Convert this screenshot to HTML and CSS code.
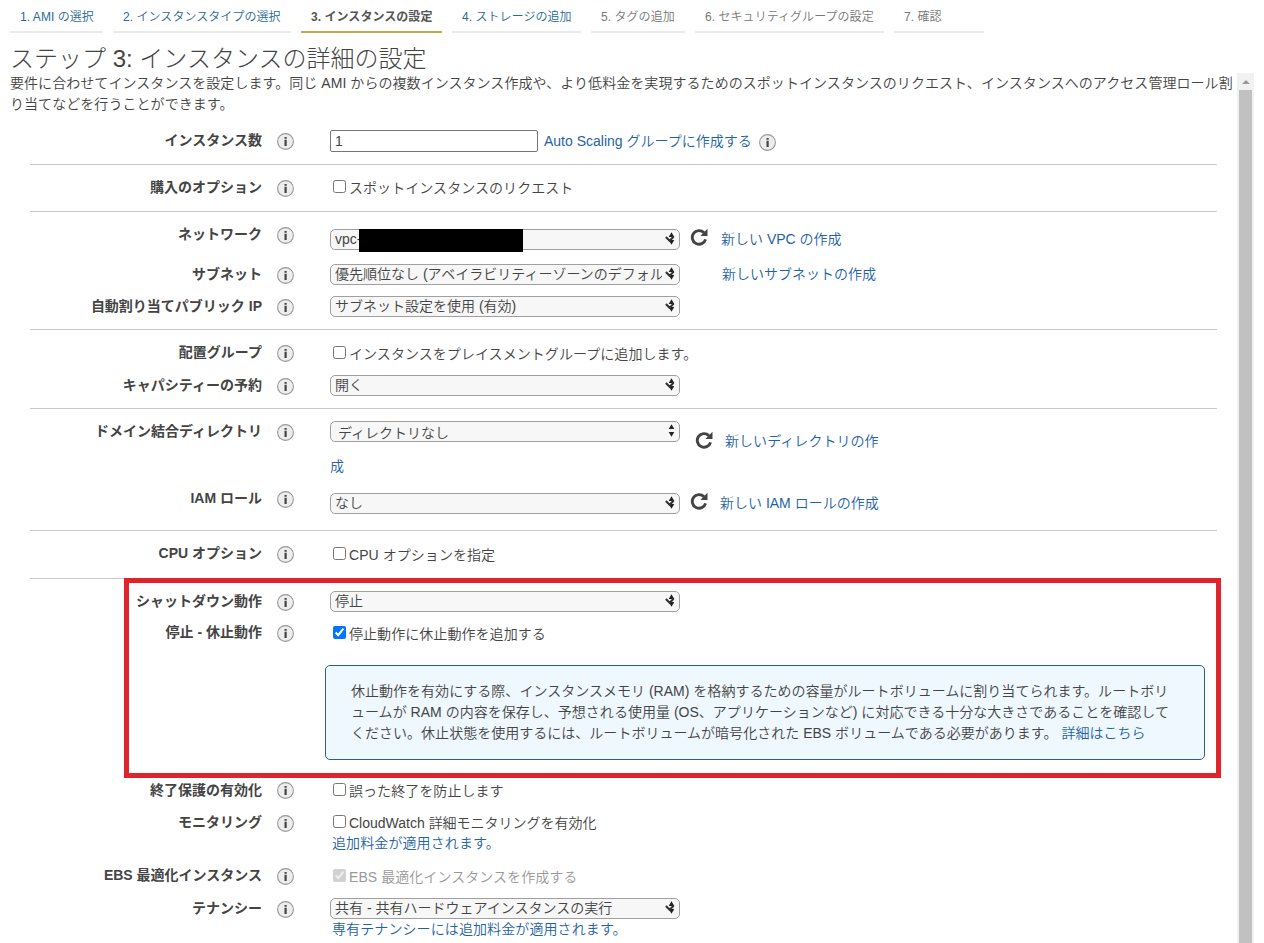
FILE: index.html
```
<!DOCTYPE html>
<html lang="ja">
<head>
    <meta charset="UTF-8">
    <meta name="viewport" content="width=device-width, initial-scale=1.0">
    <title>インスタンスの詳細の設定</title>
    <link rel="stylesheet" href="styles.css">
</head>
<body>
    <!-- Shared icons -->
    <svg class="defs" width="0" height="0">
        <symbol id="info" viewBox="0 0 17 17">
            <circle cx="8.5" cy="8.5" r="7.9" fill="#ededed" stroke="#999" stroke-width="1.1"/>
            <path d="M7.5 3.9h2.2v1.9H7.5zM7.5 6.8h2.2v6.3H7.5z" fill="#444"/>
        </symbol>
        <symbol id="arrows" viewBox="0 0 11 13">
            <path d="M6.5 0.3L9.3 4.9H3.7zM6.5 12.7L3.7 8.1h5.6z" fill="#222"/>
            <path d="M0.9 5l3.7 3.7L8.6 4.7" fill="none" stroke="#333" stroke-width="2.1"/>
        </symbol>
        <symbol id="updown" viewBox="0 0 11 13">
            <path d="M6.5 0.3L9.3 4.9H3.7zM6.5 12.7L3.7 8.1h5.6z" fill="#222"/>
        </symbol>
        <symbol id="refresh" viewBox="0 0 18 18">
            <path d="M13.9 4.6A6.8 6.8 0 1 0 15.6 11.4" fill="none" stroke="#444" stroke-width="2.9"/>
            <path d="M17.5 0.8v7.1h-7.1z" fill="#444"/>
        </symbol>
    </svg>

    <nav class="steps">
        <a class="step step-1">1. AMI の選択</a>
        <a class="step step-2">2. インスタンスタイプの選択</a>
        <a class="step step-3 active">3. インスタンスの設定</a>
        <a class="step step-4">4. ストレージの追加</a>
        <a class="step step-5 todo">5. タグの追加</a>
        <a class="step step-6 todo">6. セキュリティグループの設定</a>
        <a class="step step-7 todo">7. 確認</a>
    </nav>

    <h1>ステップ <span class="number">3:</span> インスタンスの詳細の設定</h1>

    <div class="main">
        <div class="content">
            <p class="intro">要件に合わせてインスタンスを設定します。同じ AMI からの複数インスタンス作成や、より低料金を実現するためのスポットインスタンスのリクエスト、インスタンスへのアクセス管理ロール割り当てなどを行うことができます。</p>

            <section class="group">
                <div class="row">
                    <label class="name">インスタンス数</label>
                    <svg class="info"><use href="#info"/></svg>
                    <div class="field">
                        <input class="count" type="text" value="1">
                        <a class="scaling">Auto Scaling グループに作成する</a>
                        <svg class="info info-after"><use href="#info"/></svg>
                    </div>
                </div>
            </section>

            <section class="group">
                <div class="row">
                    <label class="name">購入のオプション</label>
                    <svg class="info"><use href="#info"/></svg>
                    <label class="check"><input type="checkbox">スポットインスタンスのリクエスト</label>
                </div>
            </section>

            <section class="group">
                <div class="row row-network">
                    <label class="name">ネットワーク</label>
                    <svg class="info"><use href="#info"/></svg>
                    <div class="field lowered">
                        <div class="select">
                            <select><option>vpc-</option></select>
                            <svg><use href="#arrows"/></svg>
                            <span class="mask"></span>
                        </div>
                        <svg class="refresh"><use href="#refresh"/></svg>
                        <a class="create">新しい VPC の作成</a>
                    </div>
                </div>
                <div class="row row-select">
                    <label class="name">サブネット</label>
                    <svg class="info"><use href="#info"/></svg>
                    <div class="field">
                        <div class="select">
                            <select><option>優先順位なし (アベイラビリティーゾーンのデフォルト)</option></select>
                            <svg><use href="#arrows"/></svg>
                        </div>
                        <a class="create create-subnet">新しいサブネットの作成</a>
                    </div>
                </div>
                <div class="row row-last">
                    <label class="name">自動割り当てパブリック IP</label>
                    <svg class="info"><use href="#info"/></svg>
                    <div class="field">
                        <div class="select">
                            <select><option>サブネット設定を使用 (有効)</option></select>
                            <svg><use href="#arrows"/></svg>
                        </div>
                    </div>
                </div>
            </section>

            <section class="group">
                <div class="row row-placement">
                    <label class="name">配置グループ</label>
                    <svg class="info"><use href="#info"/></svg>
                    <label class="check check-low">
                        <input type="checkbox">インスタンスをプレイスメントグループに追加します。</label>
                </div>
                <div class="row row-last">
                    <label class="name">キャパシティーの予約</label>
                    <svg class="info"><use href="#info"/></svg>
                    <div class="field">
                        <div class="select">
                            <select><option>開く</option></select>
                            <svg><use href="#arrows"/></svg>
                        </div>
                    </div>
                </div>
            </section>

            <section class="group">
                <div class="row row-directory">
                    <label class="name">ドメイン結合ディレクトリ</label>
                    <svg class="info"><use href="#info"/></svg>
                    <div>
                        <div class="field">
                            <div class="select select-directory">
                                <select><option>ディレクトリなし</option></select>
                                <svg><use href="#updown"/></svg>
                            </div>
                            <svg class="refresh refresh-directory"><use href="#refresh"/></svg>
                            <a class="create create-directory">新しいディレクトリの作</a>
                        </div>
                        <a class="create-rest">成</a>
                    </div>
                </div>
                <div class="row row-iam">
                    <label class="name">IAM ロール</label>
                    <svg class="info"><use href="#info"/></svg>
                    <div class="field lowered">
                        <div class="select">
                            <select><option>なし</option></select>
                            <svg><use href="#arrows"/></svg>
                        </div>
                        <svg class="refresh"><use href="#refresh"/></svg>
                        <a class="create create-iam">新しい IAM ロールの作成</a>
                    </div>
                </div>
            </section>

            <section class="group">
                <div class="row row-cpu">
                    <label class="name">CPU オプション</label>
                    <svg class="info"><use href="#info"/></svg>
                    <label class="check check-low"><input type="checkbox">CPU オプションを指定</label>
                </div>
            </section>

            <section class="group group-last">
                <div class="highlight"></div>
                <div class="row row-shutdown">
                    <label class="name">シャットダウン動作</label>
                    <svg class="info"><use href="#info"/></svg>
                    <div class="field">
                        <div class="select">
                            <select><option>停止</option></select>
                            <svg><use href="#arrows"/></svg>
                        </div>
                    </div>
                </div>
                <div class="row row-hibernate">
                    <label class="name">停止 - 休止動作</label>
                    <svg class="info"><use href="#info"/></svg>
                    <label class="check check-low"><input type="checkbox" checked>停止動作に休止動作を追加する</label>
                </div>
                <div class="notice">
                    <span>休止動作を有効にする際、インスタンスメモリ (RAM) を格納するための容量がルートボリュームに割り当てられます。ルートボリ</span><br>
                    <span>ュームが RAM の内容を保存し、予想される使用量 (OS、アプリケーションなど) に対応できる十分な大きさであることを確認して</span><br>
                    <span>ください。休止状態を使用するには、ルートボリュームが暗号化された EBS ボリュームである必要があります。</span>
                    <a>詳細はこちら</a>
                </div>
                <div class="row row-select">
                    <label class="name">終了保護の有効化</label>
                    <svg class="info info-up"><use href="#info"/></svg>
                    <label class="check"><input type="checkbox">誤った終了を防止します</label>
                </div>
                <div class="row row-monitoring">
                    <label class="name">モニタリング</label>
                    <svg class="info"><use href="#info"/></svg>
                    <div>
                        <label class="check check-plain"><input type="checkbox">CloudWatch 詳細モニタリングを有効化</label>
                        <a class="charge">追加料金が適用されます。</a>
                    </div>
                </div>
                <div class="row row-placement">
                    <label class="name">EBS 最適化インスタンス</label>
                    <svg class="info"><use href="#info"/></svg>
                    <label class="check check-low disabled"><input type="checkbox" checked disabled>EBS 最適化インスタンスを作成する</label>
                </div>
                <div class="row">
                    <label class="name">テナンシー</label>
                    <svg class="info"><use href="#info"/></svg>
                    <div>
                        <div class="select">
                            <select><option>共有 - 共有ハードウェアインスタンスの実行</option></select>
                            <svg><use href="#arrows"/></svg>
                        </div>
                        <a class="charge">専有テナンシーには追加料金が適用されます。</a>
                    </div>
                </div>
            </section>
        </div>

        <div class="scrollbar">
            <div class="scroll-up"></div>
            <div class="scroll-thumb"></div>
        </div>
    </div>
</body>
</html>
```
FILE: styles.css
```
* {
    box-sizing: border-box;
}

body {
    margin: 0;
    height: 943px;
    overflow: hidden;
    background: #fff;
    color: #444;
    font-family: "Liberation Sans", "Noto Sans CJK JP", sans-serif;
    font-size: 14px;
    font-weight: 350;
    line-height: 20px;
}

a {
    color: #1f63a3;
    text-decoration: none;
    white-space: nowrap;
}

.defs {
    position: absolute;
}

/* Wizard steps */
.steps {
    display: flex;
    gap: 10px;
    height: 33px;
    padding-left: 10px;
    font-size: 12px;
    letter-spacing: 0.05px;
}

.step {
    height: 33px;
    padding: 7px 0 0 10px;
    border-bottom: 2px solid #eaeaea;
    color: #2a6a94;
}

.step-1 { width: 93px; }
.step-2 { width: 178px; }
.step-3 { width: 141px; }
.step-4 { width: 129px; }
.step-5 { width: 94px; }
.step-6 { width: 189px; }
.step-7 { width: 90px; }

.step.active {
    border-color: #cda349;
    color: #555;
    font-weight: bold;
}

.step.todo {
    color: #777;
}

h1 {
    height: 40px;
    margin: 0;
    padding: 8px 0 0 10px;
    font-size: 24px;
    font-weight: 300;
    line-height: 36px;
}

.number {
    font-weight: 400;
}

.main {
    display: flex;
    height: 870px;
}

.content {
    width: 1237px;
}

.intro {
    height: 42px;
    margin: 0 0 3px;
    padding-left: 10px;
    letter-spacing: 0.06px;
    line-height: 21px;
}

/* Form groups */
.group {
    width: 1187px;
    margin-left: 30px;
    padding: 12px 0;
    border-bottom: 1px solid #c8c8c8;
}

.group-last {
    position: relative;
    border-bottom: none;
}

.row {
    display: flex;
    align-items: flex-start;
    height: 22px;
}

.row-network { height: 40px; }
.row-select { height: 32px; }
.row-last { height: 21px; }
.row-placement { height: 33px; }
.row-directory { height: 67px; }
.row-iam { height: 30px; }
.row-cpu { height: 23px; }
.row-shutdown { height: 31px; }
.row-hibernate { height: 43px; }
.row-monitoring { height: 53px; }

.name {
    width: 232px;
    font-weight: bold;
    text-align: right;
    white-space: nowrap;
}

.info {
    flex: none;
    width: 17px;
    height: 17px;
    margin: 3px 36px 0 15px;
}

.info-up {
    margin-top: 2px;
}

.field {
    display: flex;
    align-items: flex-start;
}

.lowered {
    margin-top: 5px;
}

.count {
    width: 208px;
    height: 22px;
    padding: 0 4px;
    border: 1px solid #767676;
    border-radius: 2px;
    color: #444;
    font: inherit;
}

.scaling {
    margin: 1px 0 0 6px;
}

.info-after {
    margin: 4px 0 0 7px;
}

.check {
    display: flex;
    height: 20px;
    margin-top: 1px;
    letter-spacing: 0.06px;
    white-space: nowrap;
}

.check-low {
    margin-top: 2px;
}

.check-plain {
    letter-spacing: normal;
}

.check input {
    width: 13px;
    height: 13px;
    margin: 2px 3px 0;
}

.disabled {
    color: #999;
}

.select {
    position: relative;
    width: 350px;
    height: 21px;
}

.select select {
    display: block;
    width: 350px;
    height: 21px;
    padding: 0 17px 0 4px;
    appearance: none;
    border: 1px solid #a0a0a0;
    border-radius: 5px;
    background: #f7f7f7;
    color: #444;
    font: inherit;
    line-height: 19px;
}

.select svg {
    position: absolute;
    top: 3px;
    right: 4px;
    width: 11px;
    height: 13px;
}

.select-directory select {
    padding: 2px 17px 0 7px;
}

.mask {
    position: absolute;
    top: 0;
    left: 29px;
    width: 164px;
    height: 23px;
    background: #000;
}

.refresh {
    width: 18px;
    height: 18px;
    margin: -1px 0 0 10px;
}

.create {
    margin-left: 13px;
}

.create-subnet {
    margin-left: 42px;
}

.create-iam {
    margin-left: 12px;
}

.refresh-directory {
    margin: 10px 0 0 15px;
}

.create-directory {
    margin: 10px 0 0 12px;
    letter-spacing: 0.06px;
}

.create-rest {
    display: block;
    margin-top: 5px;
}

.charge {
    display: block;
    padding-left: 2px;
    letter-spacing: 0.1px;
    line-height: 21px;
}

.notice {
    width: 880px;
    height: 95px;
    margin: 0 0 20px 295px;
    padding: 15px 0 0 25px;
    border: 1px solid #27647f;
    border-radius: 5px;
    background: #eff8fe;
    letter-spacing: 0.02px;
    line-height: 21px;
    white-space: nowrap;
}

.highlight {
    position: absolute;
    top: -1px;
    left: 94px;
    width: 1097px;
    height: 200px;
    border: 5px solid #df242b;
}

/* Scrollbar */
.scrollbar {
    width: 17px;
    height: 870px;
    background: #f1f1f1;
}

.scroll-up {
    height: 17px;
    padding: 7px 5px 0;
}

.scroll-up::before {
    content: "";
    display: block;
    border: 4px solid transparent;
    border-top: none;
    border-bottom-color: #999;
    width: 0;
}

.scroll-thumb {
    width: 13px;
    height: 853px;
    margin-left: 2px;
    background: #c1c1c1;
}
```
